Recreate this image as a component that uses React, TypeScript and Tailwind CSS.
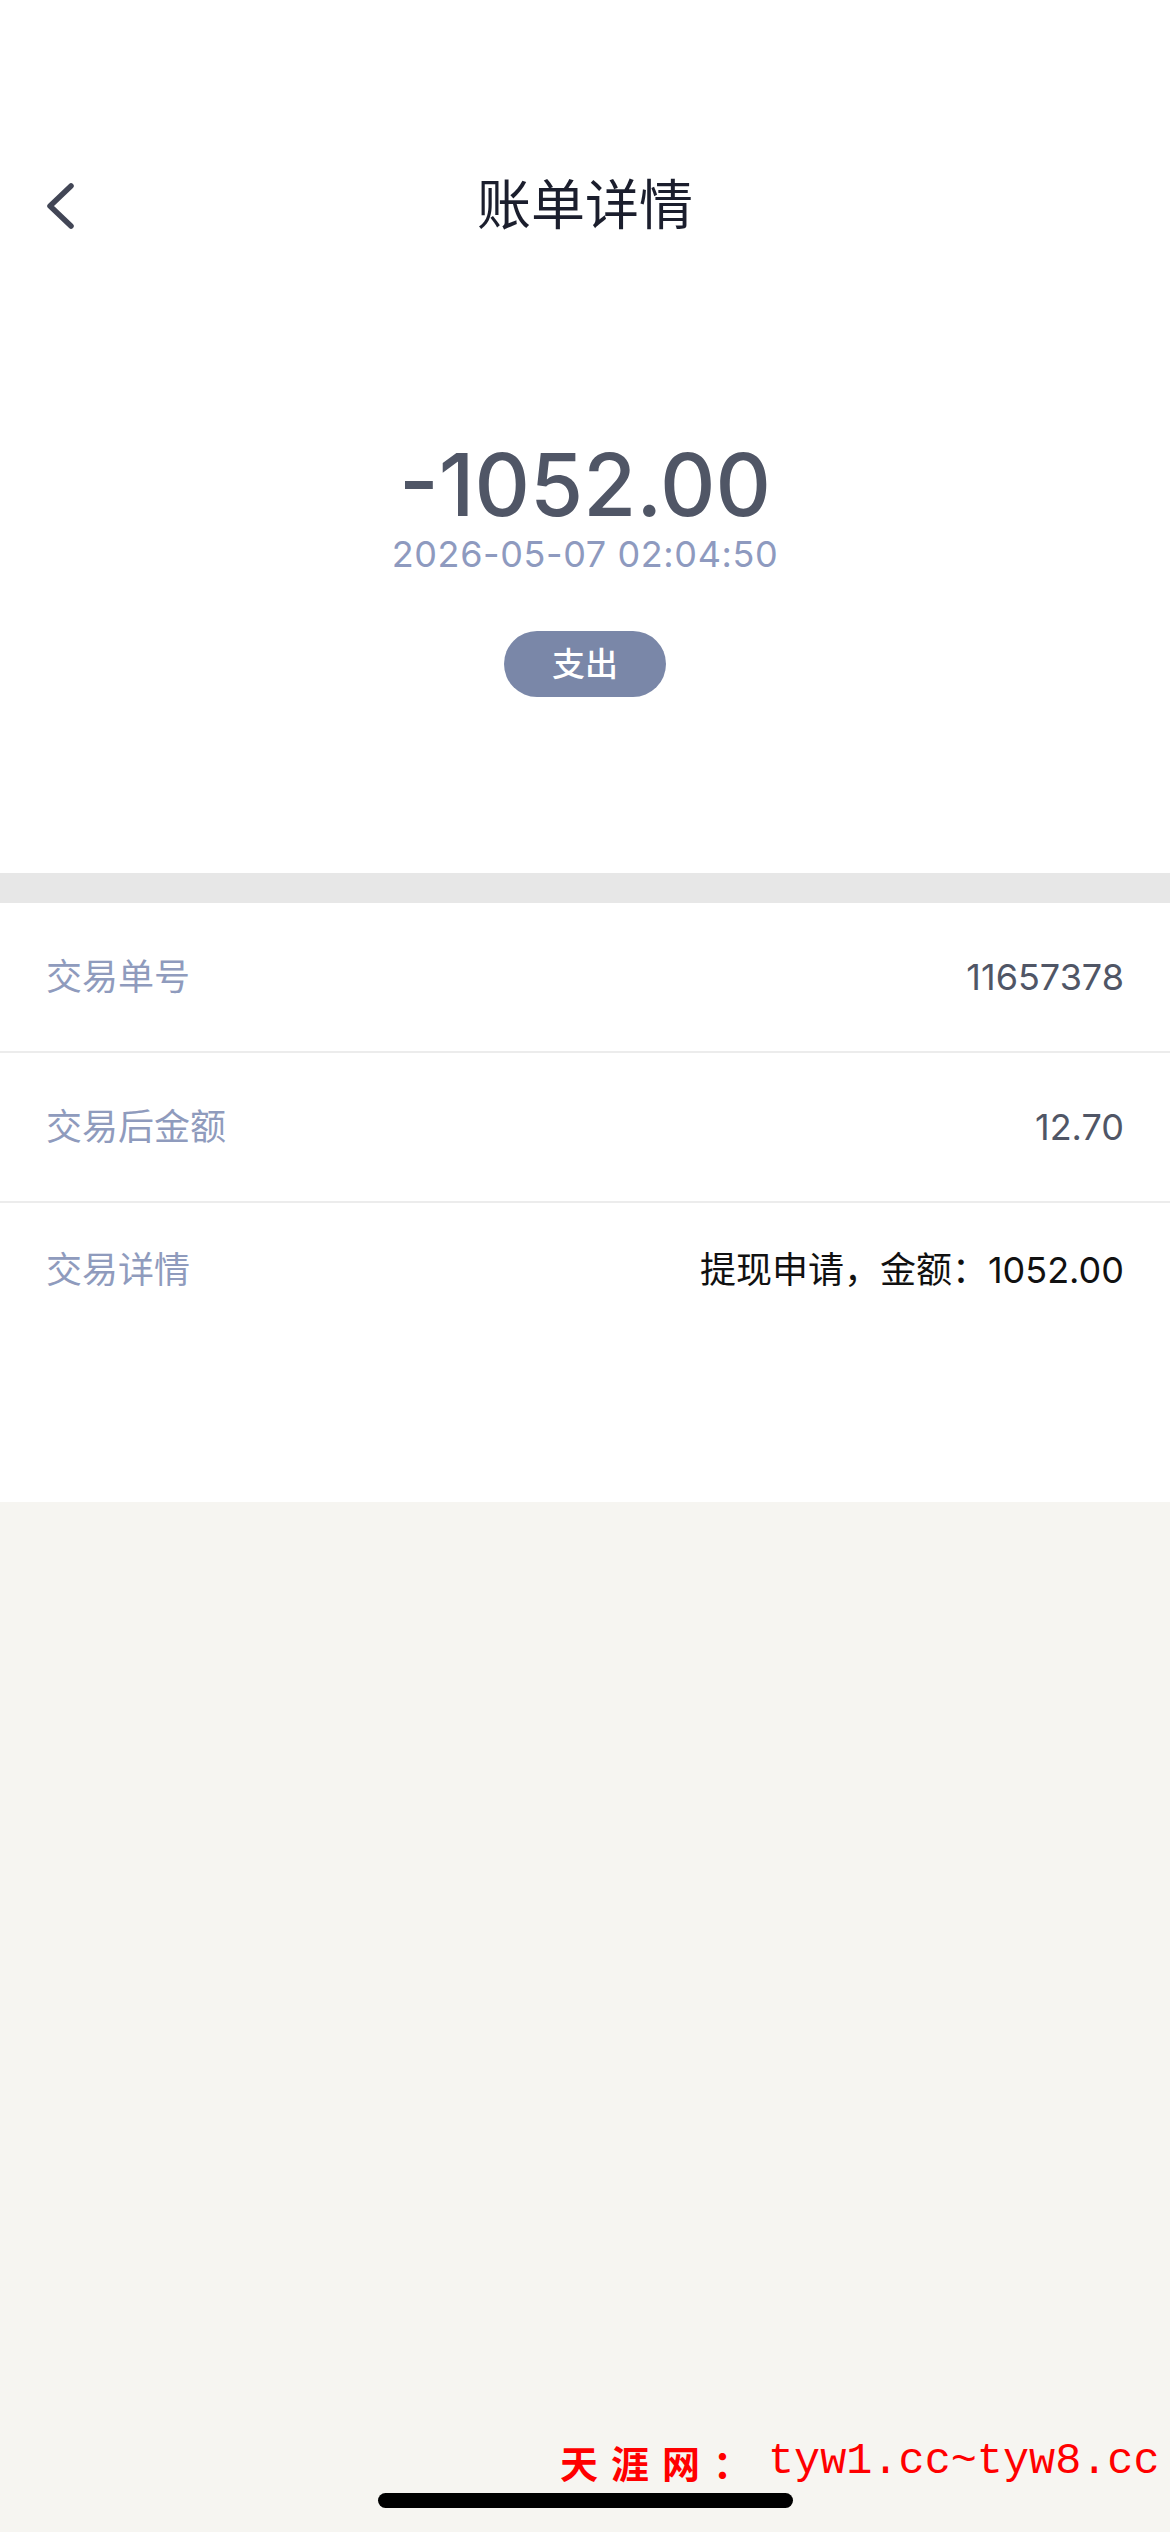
import React from "react";

const latin = "font-['Inter','Noto_Sans_CJK_SC',sans-serif]";

function Row({ label, value, valueClass, last }: { label: string; value: string; valueClass: string; last?: boolean }) {
  return (
    <div
      className={
        last
          ? "flex items-start justify-between px-[46px] pt-[49px] h-[299px]"
          : "flex items-center justify-between px-[46px] h-[150px] border-b-2 border-[#ececec]"
      }
    >
      <span className="text-[36px] leading-[36px] text-[#8f9bbd]">{label}</span>
      <span className={"text-[36px] leading-[36px] " + valueClass}>{value}</span>
    </div>
  );
}

export default function App() {
  return (
    <div className={"relative w-[1170px] min-h-[2532px] bg-[#f6f5f1] " + latin}>
      <div className="bg-white">
        <div className="pt-[150px]">
          <div className="relative flex h-[112px] items-center justify-center">
            <svg
              className="absolute left-[40px] top-[30px]"
              width="40"
              height="52"
              viewBox="0 0 40 52"
              fill="none"
            >
              <path d="M31 6 L10 26 L31 46" stroke="#424656" strokeWidth="5.5" strokeLinecap="round" strokeLinejoin="round" />
            </svg>
            <span className="text-[54px] leading-none text-[#1b1e2d] font-normal">账单详情</span>
          </div>
        </div>
        <div className="flex flex-col items-center pt-[180px] pb-[176px]">
          <div className="text-[86px] leading-[86px] text-[#505666] font-medium">-1052.00</div>
          <div className="mt-[8px] text-[36px] leading-[36px] text-[#8e9abf] tracking-[0.6px]">2026-05-07 02:04:50</div>
          <div className="mt-[59px] flex h-[66px] w-[162px] items-center justify-center rounded-full bg-[#7a87a8]">
            <span className="text-[33px] leading-none text-white font-medium">支出</span>
          </div>
        </div>
      </div>
      <div className="h-[30px] bg-[#e7e7e7]" />
      <div className="bg-white">
        <Row label="交易单号" value="11657378" valueClass="text-[#505666]" />
        <Row label="交易后金额" value="12.70" valueClass="text-[#505666]" />
        <Row label="交易详情" value="提现申请，金额：1052.00" valueClass="text-[#111111]" last />
      </div>

      <div className="absolute left-[560px] top-[2440px] flex items-center">
        <span className="text-[38px] leading-none font-bold text-[#ff0000] tracking-[13px] font-['Noto_Sans_CJK_SC',sans-serif]">天涯网：</span>
        <span className="ml-[4px] text-[43.5px] leading-none text-[#ff0000] font-['Liberation_Mono',monospace]">tyw1.cc~tyw8.cc</span>
      </div>
      <div className="absolute left-[378px] top-[2493px] h-[15px] w-[415px] rounded-full bg-black" />
    </div>
  );
}
